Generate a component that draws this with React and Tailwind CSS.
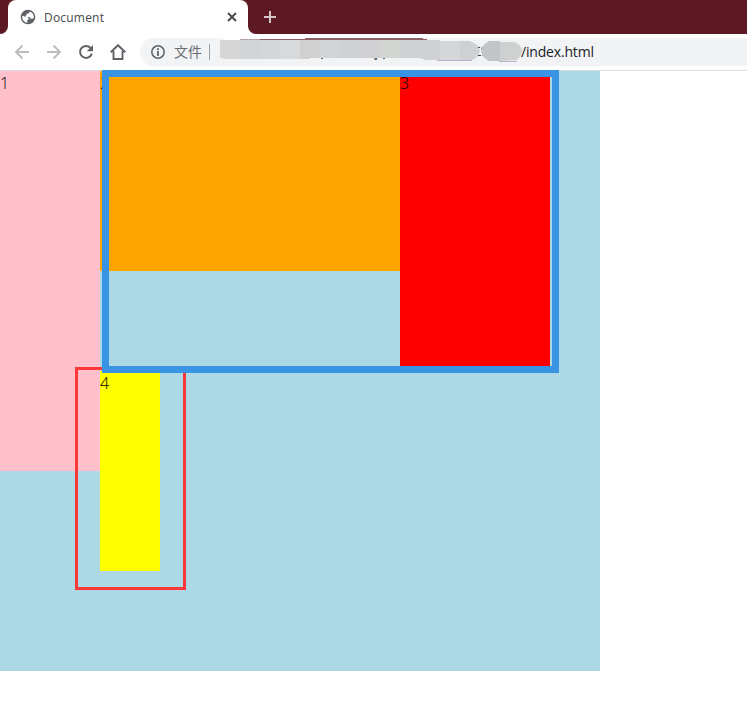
function TabStrip() {
  return (
    <div className="flex h-[34px] bg-[#5c1923]">
      <div className="h-[34px] w-2 bg-white">
        <div className="h-full w-full rounded-br-lg bg-[#5c1923]" />
      </div>
      <div className="flex h-[34px] w-60 items-center rounded-t-lg bg-white pl-3 pr-[11px]">
        <svg className="mr-2 h-4 w-4 shrink-0" viewBox="1 1 22 22">
          <path
            d="M12 2C6.48 2 2 6.48 2 12s4.48 10 10 10 10-4.48 10-10S17.52 2 12 2zm-1 17.93c-3.95-.49-7-3.85-7-7.93 0-.62.08-1.21.21-1.79L9 12h1.5c1.3 0 2.5 1 2.5 2.3 0 1.2-.9 1.9-2 1.9v3.73zM14.5 16.3c1.2-.3 1.6-1.3 1.2-2.3-.4-1.2-1.4-2-2.7-2H9.2c-1-.2-1.2-1.6-.2-2 .8-.3 1-.9 1-1.5 0-.9 1-1.3 2-1.3 1.3 0 2.2-.8 2.2-2.6 3.2.9 5.8 3.8 5.8 7.4 0 .8-.1 1.5-.3 2.2h-2c-1 0-1.6.5-1.8 1.2-.1.5-.6.9-1.4.9z"
            fill="#5f6368"
            fillRule="evenodd"
          />
        </svg>
        <span className="font-['Open_Sans','Noto_Sans',sans-serif] text-[12px] leading-4 tracking-[0.2px] text-[#45494d] relative top-px">Document</span>
        <svg className="ml-auto h-[10px] w-[10px]" viewBox="0 0 10 10">
          <path d="M1 1 9 9M9 1 1 9" stroke="#45494d" strokeWidth="1.8" />
        </svg>
      </div>
      <div className="h-[34px] w-2 bg-white">
        <div className="h-full w-full rounded-bl-lg bg-[#5c1923]" />
      </div>
      <div className="flex items-center pl-2">
        <svg className="h-3 w-3" viewBox="0 0 12 12">
          <path d="M6 0V12M0 6H12" stroke="#d5c5c8" strokeWidth="2" />
        </svg>
      </div>
    </div>
  );
}

function Redaction() {
  return (
    <svg className="h-7 w-[305px] shrink-0" viewBox="218 38 305 28">
      <path d="M223 38H305V39H240V40H223Z" fill="#fff" />
      <path d="M240 39H305V38H423V39H427V41H240Z" fill="#8c5e66" />
      <path d="M240 39H260V40H240Z" fill="#b5a5a8" />
      <g shapeRendering="crispEdges">
        <path d="M220 40H240V59H223V58H220Z" fill="#d6d6d6" />
        <path d="M240 40H260V59H240Z" fill="#d1d5d8" />
        <path d="M260 40H280V59H260Z" fill="#d5d6d8" />
        <path d="M280 40H300V59H280Z" fill="#d9dadc" />
        <path d="M300 40H320V58H310V59H300Z" fill="#cfd0cf" />
        <path d="M320 40H340V58H320Z" fill="#d3d4d6" />
        <path d="M340 40H360V58H340Z" fill="#cfd2d4" />
        <path d="M360 40H380V58H360Z" fill="#d1d1d3" />
        <path d="M380 40H400V58H380Z" fill="#d3d5d3" />
        <path d="M400 40H420V58H400Z" fill="#cfd2d2" />
        <path d="M420 40H440V60H424V59H421V58H420Z" fill="#d0d1d2" />
        <path d="M440 41H460V60H440Z" fill="#d5d6d8" />
      </g>
      <path d="M460 41H469Q478 43 480 51Q478 59 471 60H460Z" fill="#cfd0d2" />
      <path d="M437 60H472V61H437Z" fill="#b8b0d0" />
      <path d="M321 58H323V59H321ZM375 58H377V60H375ZM383 58H385V59H383Z" fill="#3d7098" />
      <path d="M374 58H375V60H374Z" fill="#c59564" />
      <path d="M478 47H480V48H478ZM478 55H481V56H478Z" fill="#404347" />
      <path d="M481 47H484V56H482V51H481Z" fill="#b89a83" />
      <path d="M500 41H489Q482 45 481 51Q482 58 489 61H500Z" fill="#c1c5c7" />
      <path d="M500 42H515Q521 45 522 50Q521 57 517 60L500 61Z" fill="#cfd1d1" />
      <path d="M499 61H517V62H499Z" fill="#b8b0d0" />
    </svg>
  );
}

function Toolbar() {
  return (
    <div className="flex h-[37px] items-center border-b border-[#dadce0] bg-white pl-[14px]">
      <div className="flex w-[126px] shrink-0 gap-4">
        <svg className="h-4 w-4" viewBox="0 0 16 16" fill="none" stroke="#bbbdbf" strokeWidth="2">
          <path d="M15 8H2.5M8.5 1.5 2 8 8.5 14.5" />
        </svg>
        <svg className="h-4 w-4" viewBox="0 0 16 16" fill="none" stroke="#bbbdbf" strokeWidth="2">
          <path d="M1 8H13.5M7.5 1.5 14 8 7.5 14.5" />
        </svg>
        <svg className="h-4 w-4" viewBox="0 0 16 16">
          <path d="M12.6 4A6 6 0 1 0 13.8 9.6" fill="none" stroke="#5f6368" strokeWidth="2" />
          <path d="M15 1V7.2H8.8Z" fill="#5f6368" />
        </svg>
        <svg className="h-4 w-4" viewBox="0 0 16 16" fill="none" stroke="#5f6368" strokeWidth="1.9">
          <path d="M.7 8.2 8 1.2 15.3 8.2M3.5 7V15H12.5V7" />
        </svg>
      </div>
      <div className="flex h-7 flex-1 items-center overflow-hidden rounded-l-full bg-[#f1f3f4] pl-[11px]">
        <svg className="h-[14px] w-[14px] shrink-0" viewBox="0 0 14 14">
          <circle cx="7" cy="7" r="6.2" fill="none" stroke="#5f6368" strokeWidth="1.5" />
          <path d="M7 6V11M7 3.2V4.9" stroke="#5f6368" strokeWidth="1.8" />
        </svg>
        <span className="mb-0.5 ml-[9px] w-7 shrink-0 whitespace-nowrap font-['Noto_Sans_CJK_SC',sans-serif] text-[14px] leading-5 text-[#6a6e72]">文件</span>
        <span className="ml-[7px] mr-2 h-4 w-px shrink-0 bg-[#9da0a3]" />
        <Redaction />
        <span className="-ml-[2px] font-['Open_Sans','Noto_Sans',sans-serif] text-[14px] leading-5 tracking-[-0.18px] text-[#202124]">/index.html</span>
      </div>
    </div>
  );
}

function FloatDemo() {
  return (
    <div className="relative font-['Open_Sans','Noto_Sans',sans-serif] text-[16px] font-light leading-6 text-black">
      <div className="h-[600px] w-[600px] bg-[#add8e6]">
        <div className="float-left h-[400px] w-[100px] bg-[#ffc0cb]">1</div>
        <div className="float-left h-[200px] w-[300px] bg-[#ffa500]">2</div>
        <div className="float-left h-[300px] w-[150px] bg-[#ff0000]">3</div>
        <div className="float-left h-[200px] w-[60px] bg-[#ffff00]">4</div>
      </div>
      <div className="absolute left-[75px] top-[296px] h-[223px] w-[111px] border-[3px] border-[#fb3838]" />
      <div className="absolute -top-px left-[102px] h-[303px] w-[457px] border-[7px] border-[#3994e6]" />
    </div>
  );
}

export default function App() {
  return (
    <div className="h-[702px] w-[747px] overflow-hidden bg-white">
      <TabStrip />
      <Toolbar />
      <FloatDemo />
    </div>
  );
}
